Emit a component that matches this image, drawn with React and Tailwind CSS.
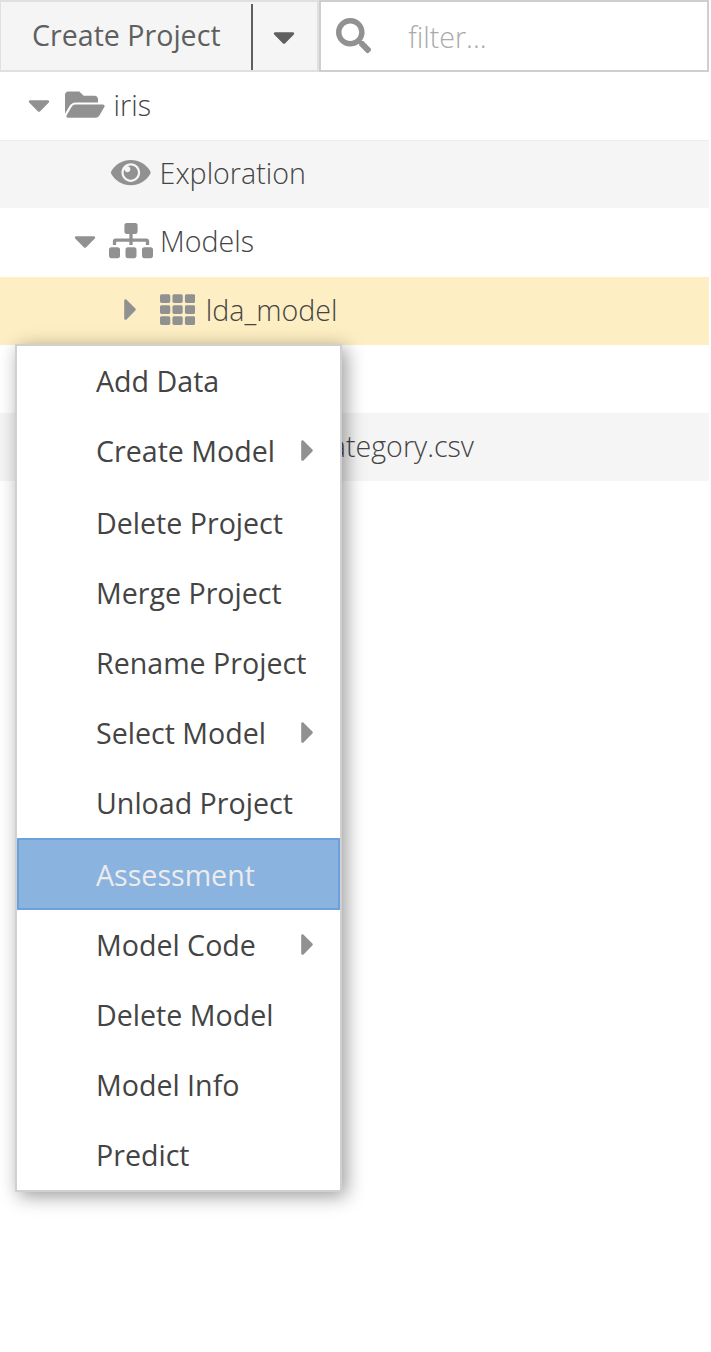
import React from "react";
import { FaSearch, FaFolderOpen, FaSitemap, FaTh, FaCaretDown, FaCaretRight } from "react-icons/fa";

function Eye({ className }) {
  return (
    <svg viewBox="0 0 576 512" fill="currentColor" className={className}>
      <path d="M569.354 231.631C512.969 135.949 407.81 72 288 72 168.14 72 63.004 135.994 6.646 231.631a47.999 47.999 0 0 0 0 48.739C63.031 376.051 168.19 440 288 440c119.86 0 224.996-63.994 281.354-159.631a47.997 47.997 0 0 0 0-48.738zM288 392c-75.162 0-136-60.827-136-136 0-75.162 60.826-136 136-136 75.162 0 136 60.826 136 136 0 75.162-60.826 136-136 136zm104-136c0 57.438-46.562 104-104 104s-104-46.562-104-104c0-17.708 4.431-34.379 12.236-48.973l-.001.032c0 23.651 19.173 42.823 42.824 42.823s42.824-19.173 42.824-42.823c0-23.651-19.173-42.824-42.824-42.824l-.032.001C253.621 156.431 270.292 152 288 152c57.438 0 104 46.562 104 104z" />
    </svg>
  );
}

const menu = [
  { label: "Add Data" },
  { label: "Create Model", sub: true, height: "h-[72px]" },
  { label: "Delete Project" },
  { label: "Merge Project" },
  { label: "Rename Project" },
  { label: "Select Model", sub: true },
  { label: "Unload Project" },
  { label: "Assessment", active: true },
  { label: "Model Code", sub: true },
  { label: "Delete Model" },
  { label: "Model Info" },
  { label: "Predict" },
];

function MenuItem({ label, sub, active, height = "h-[70px]" }) {
  if (active) {
    return (
      <div className="flex h-[72px] shrink-0 items-center border-2 border-[#6ca1db] bg-[#8ab3e0] pt-0.5 pl-[77px] text-[#ececec]">
        {label}
      </div>
    );
  }
  return (
    <div className={`flex ${height} shrink-0 items-start pt-4 pr-[23px] pl-[79px]`}>
      <span className="flex-1">{label}</span>
      {sub && <FaCaretRight className="mt-px h-[35.2px] w-[17.6px] text-[#919191]" />}
    </div>
  );
}

function Row({ className, children }) {
  return <div className={`flex items-center ${className}`}>{children}</div>;
}

export default function App() {
  return (
    <div className="relative h-[1352px] w-[711px] overflow-hidden bg-white font-['Open_Sans',sans-serif] text-[28.6px] leading-[38px] whitespace-nowrap text-[#444]">
      <div className="flex h-[72px] w-[709px]">
        <div className="flex w-[319px] border-2 border-l-1 border-[#e0e0e0] bg-[#f5f5f5] text-[#5f5f5f]">
          <div className="mt-0.5 flex w-[252px] items-center border-r-2 border-[#5f5f5f] pb-1 pl-[31px]">
            Create Project
          </div>
          <div className="flex flex-1 items-center justify-center pt-0.5 pr-0.5">
            <FaCaretDown className="h-[35.2px] w-[22px]" />
          </div>
        </div>
        <div className="flex flex-1 items-center border-2 border-[#cfcfcf] pl-[15px]">
          <FaSearch className="h-[35.2px] w-[35.2px] text-[#919191]" />
          <span className="ml-[37px] pt-0.5 font-light text-[#aaa]">filter...</span>
        </div>
      </div>
      <div className="w-[709px] font-light">
        <Row className="h-[68px] pb-0.5 pl-[28px]">
          <FaCaretDown className="h-[35.2px] w-[22px] text-[#919191]" />
          <FaFolderOpen className="ml-[15px] h-[35.2px] w-[39.6px] text-[#919191]" />
          <span className="ml-[9px]">iris</span>
        </Row>
        <Row className="h-[68px] border-t border-[#ececec] bg-[#f5f5f5] pb-[3px] pl-[111px]">
          <Eye className="h-[35.2px] w-[39.6px] text-[#919191]" />
          <span className="ml-[9px]">Exploration</span>
        </Row>
        <Row className="h-[69px] pb-[3px] pl-[74px]">
          <FaCaretDown className="h-[35.2px] w-[22px] text-[#919191]" />
          <FaSitemap className="ml-[13px] h-[35.2px] w-[44px] text-[#919191]" />
          <span className="ml-[7px]">Models</span>
        </Row>
        <Row className="h-[68px] bg-[#fdeec3] pb-[3px] pl-[122px]">
          <FaCaretRight className="h-[35.2px] w-[17.6px] text-[#919191]" />
          <FaTh className="ml-5 h-[35.2px] w-[35.2px] text-[#919191]" />
          <span className="ml-[11px]">lda_model</span>
        </Row>
        <div className="h-[68px]" />
        <Row className="h-[68px] justify-end bg-[#f5f5f5] pr-[235px] pb-0.5">category.csv</Row>
      </div>
      <div className="absolute top-[344px] left-[15px] flex h-[848px] w-[327px] flex-col border-2 border-[#d0d0d0] bg-white font-normal shadow-[4px_4px_18px_rgba(0,0,0,0.4)]">
        {menu.map((item) => (
          <MenuItem key={item.label} {...item} />
        ))}
      </div>
    </div>
  );
}
